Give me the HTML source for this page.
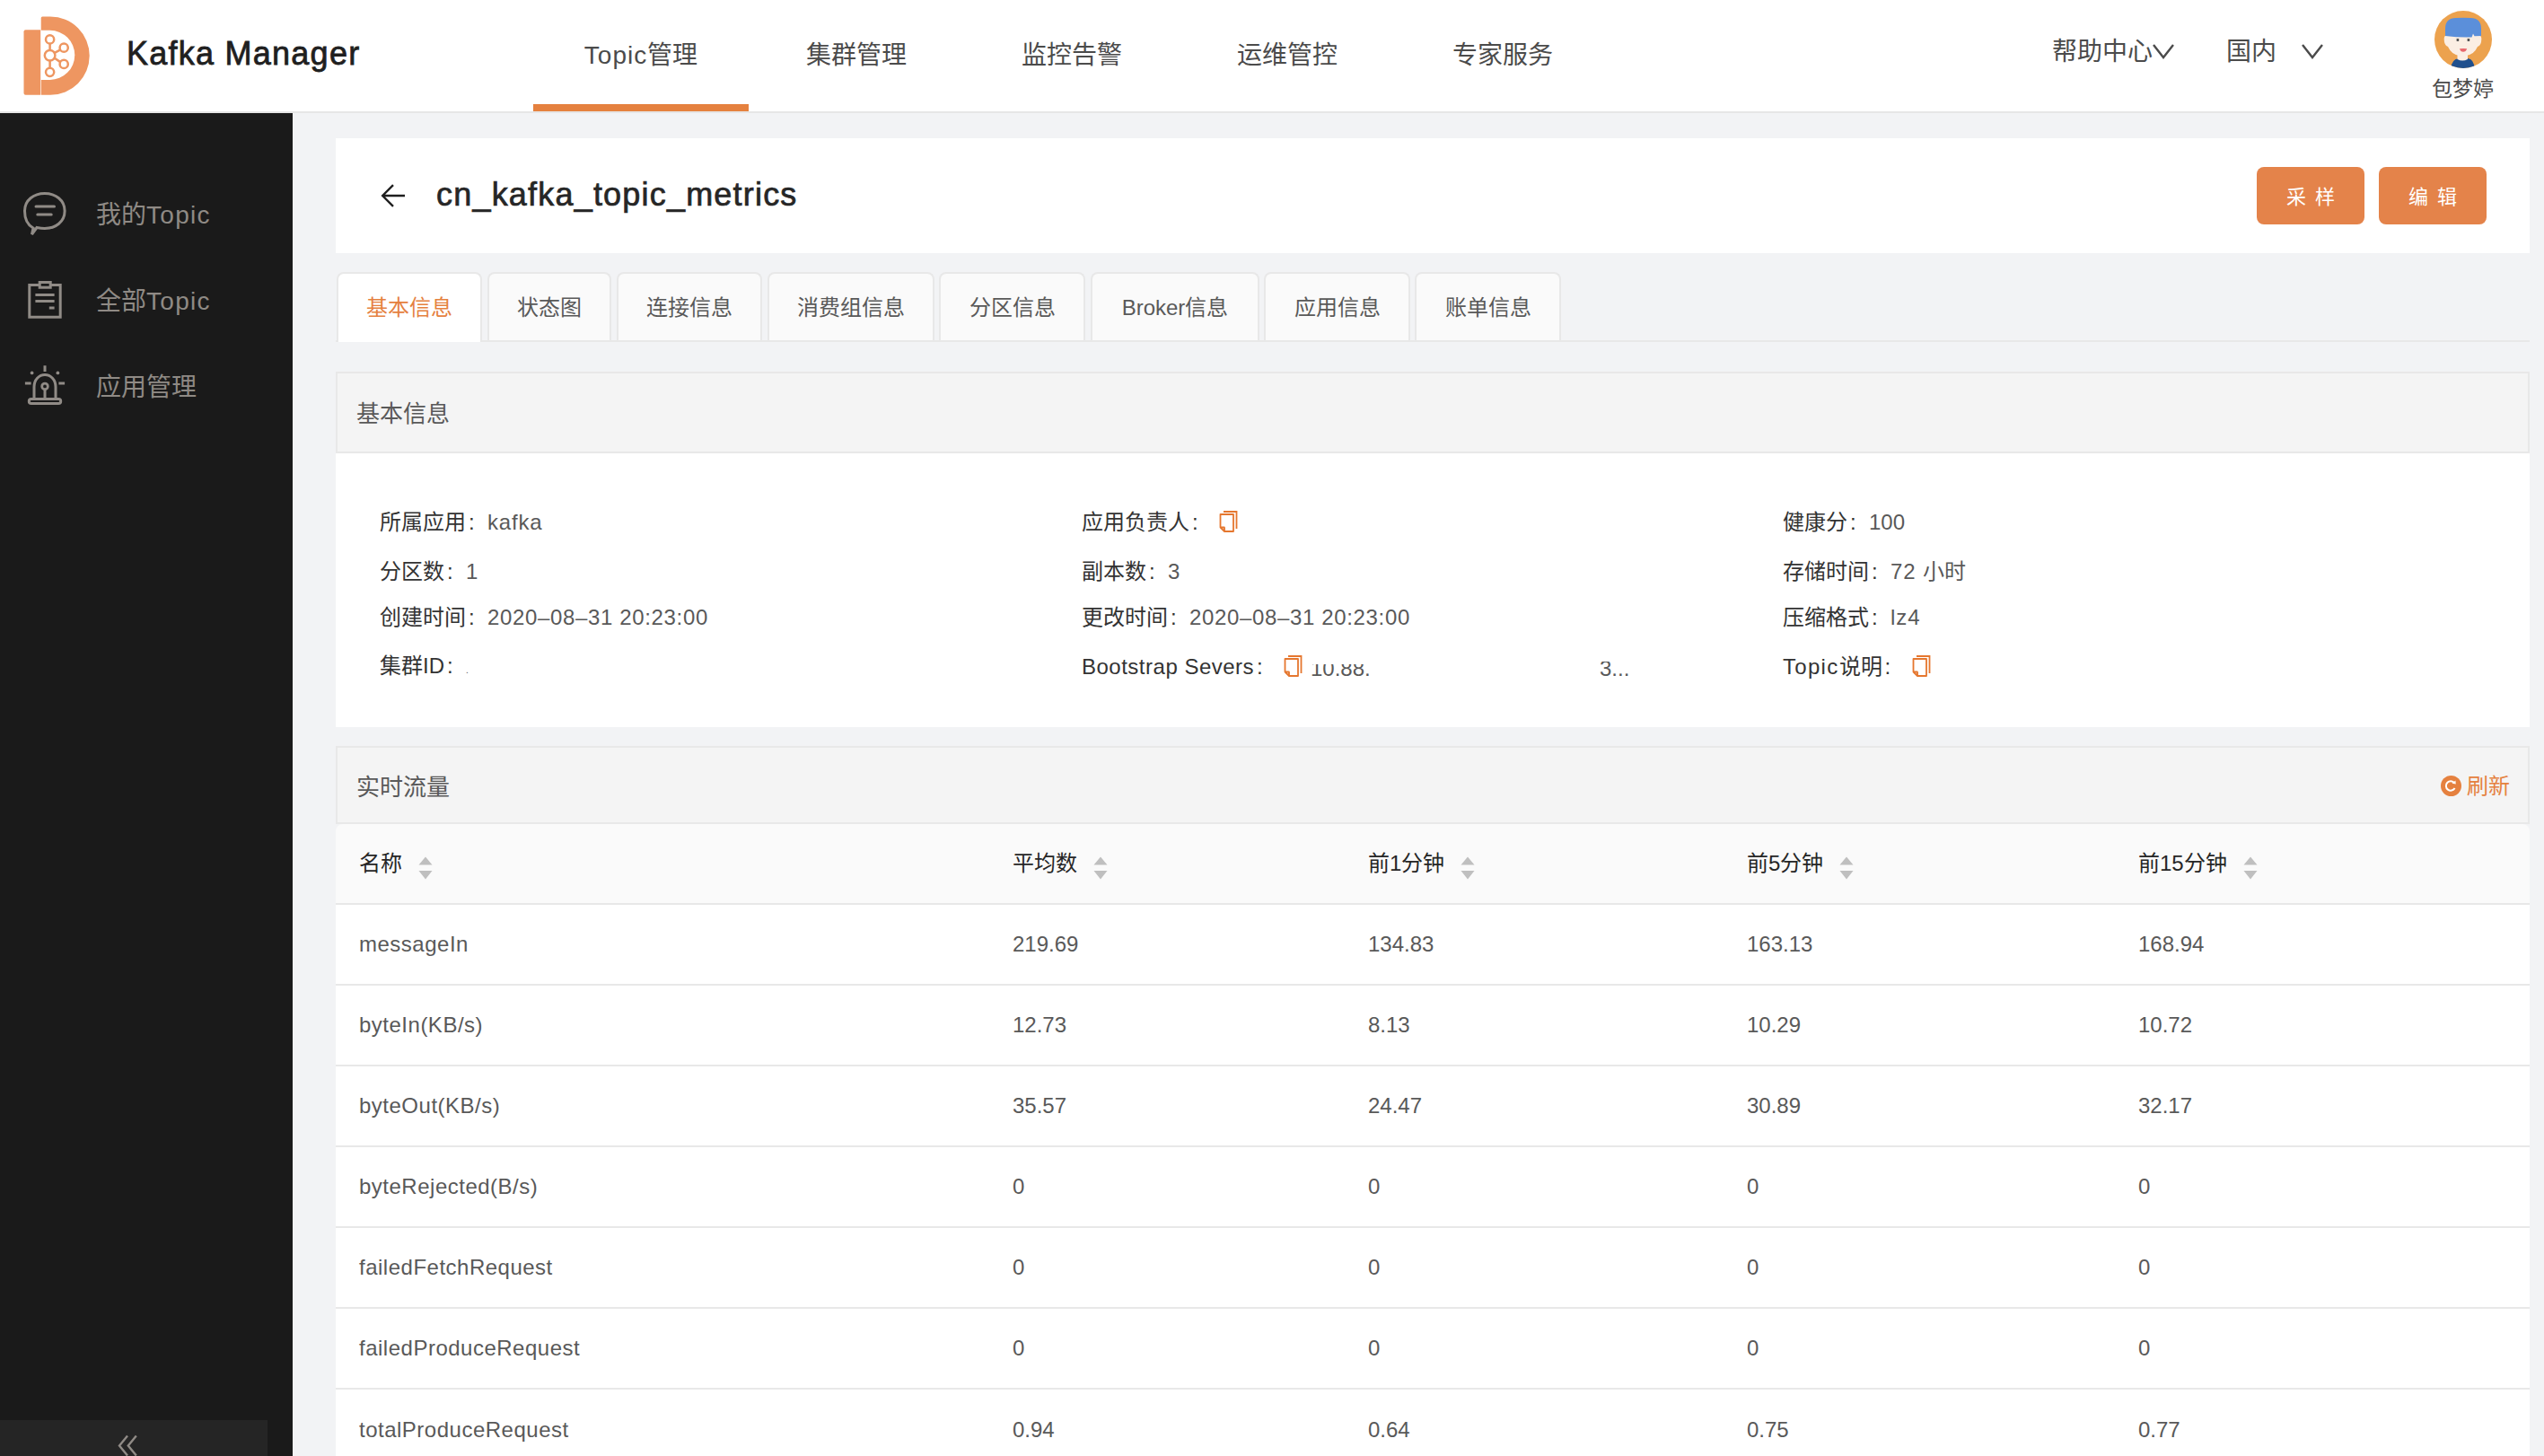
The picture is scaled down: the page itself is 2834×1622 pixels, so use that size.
<!DOCTYPE html>
<html lang="zh-CN"><head><meta charset="utf-8">
<style>
*{margin:0;padding:0;box-sizing:border-box}
html,body{width:2834px;height:1622px;overflow:hidden;background:#f2f3f5;font-family:"Liberation Sans",sans-serif}
.a{position:absolute;white-space:nowrap}
#hdr{position:absolute;left:0;top:0;width:2834px;height:126px;background:#fff;border-bottom:2px solid #e6e6e6}
#side{position:absolute;left:0;top:126px;width:326px;height:1496px;background:#1a1a1a}
.nav{position:absolute;top:38px;width:240px;height:48px;line-height:48px;text-align:center;font-size:28px;color:#4b4b4b}
.mi{position:absolute;left:107px;font-size:28px;color:#8f8a85;height:40px;line-height:40px}
.mi b{font-weight:normal;letter-spacing:1.3px}
.card{position:absolute;left:374px;width:2444px;background:#fff}
.tab{position:absolute;top:303px;height:76px;border:2px solid #e8e8e8;border-bottom:none;border-radius:8px 8px 0 0;background:#fafafa;text-align:center;line-height:76px;font-size:24px;color:#595959}
.tab.on{background:#fff;color:#e5813f;height:78px}
.ch{position:absolute;left:0;top:0;width:2444px;background:#f4f4f4;border:2px solid #e8e8e8}
.lbl{position:absolute;font-size:24px;color:#333;height:36px;line-height:36px}
.lbl span{color:#595959}
.c{display:inline-block;width:24px;padding-left:3px;font-style:normal}
.dt{font-style:normal;letter-spacing:0.65px}
.lw{letter-spacing:0.5px}
.lt{letter-spacing:1.3px}
.th{position:absolute;font-size:24px;color:#262626;height:36px;line-height:36px}
.td{position:absolute;font-size:24px;color:#595959;height:36px;line-height:36px}
.tn{letter-spacing:0.5px}
.cp{display:inline-block;vertical-align:top;margin-left:9px;margin-top:3px}
.sort{display:inline-block;vertical-align:middle;margin-left:18px;width:16px;height:26px;position:relative;top:3px}
.btn{position:absolute;top:186px;width:120px;height:64px;border-radius:8px;background:#e4834a;color:#fff;font-size:22px;line-height:68px;text-align:center;letter-spacing:10px;text-indent:10px}
</style></head>
<body>
<div id="hdr"></div>
<!-- logo -->
<svg class="a" style="left:0;top:0" width="120" height="120" viewBox="0 0 120 120">
  <path d="M45 33.3 V105.7 H28.5 Q26.5 105.7 26.5 103.7 V35.3 Q26.5 33.3 28.5 33.3 Z" fill="#ee9661"/>
  <path d="M45.7 20 Q45.7 18.5 47.2 18.5 H56.1 A43.6 43.6 0 0 1 56.1 105.7 H45.7 Z" fill="#ee9661"/>
  <path d="M45.7 33.8 H55.7 A27.55 27.55 0 0 1 55.7 88.9 H45.7 Z" fill="#fff"/>
  <g fill="none" stroke="#ee9661" stroke-width="2.5">
    <circle cx="55.6" cy="43.9" r="4.6"/><circle cx="71.2" cy="53.2" r="4.6"/><circle cx="55.6" cy="61.8" r="5.8"/>
    <circle cx="71.2" cy="71.4" r="4.6"/><circle cx="55.6" cy="80.3" r="4.6"/>
    <path d="M55.6 48.5 V56 M55.6 67.6 V75.7 M60.8 58.9 L66.9 55.6 M60.8 64.7 L66.9 68.9"/>
  </g>
</svg>
<div class="a" style="left:141px;top:35px;font-size:36px;line-height:50px;color:#1f1f1f;letter-spacing:1.25px;-webkit-text-stroke:0.8px #1f1f1f">Kafka Manager</div>

<div class="nav" style="left:594px"><span style="letter-spacing:1px">Topic</span>管理</div>
<div class="nav" style="left:834px">集群管理</div>
<div class="nav" style="left:1074px">监控告警</div>
<div class="nav" style="left:1314px">运维管控</div>
<div class="nav" style="left:1554px">专家服务</div>
<div class="a" style="left:594px;top:116px;width:240px;height:8px;background:#e5813f"></div>

<div class="a" style="left:2286px;top:38px;font-size:28px;line-height:40px;color:#4b4b4b">帮助中心</div>
<svg class="a" style="left:2396px;top:47px" width="28" height="20" viewBox="0 0 28 20"><path d="M3 3 L14 17 L25 3" fill="none" stroke="#4b4b4b" stroke-width="2.4"/></svg>
<div class="a" style="left:2480px;top:38px;font-size:28px;line-height:40px;color:#4b4b4b">国内</div>
<svg class="a" style="left:2562px;top:47px" width="28" height="20" viewBox="0 0 28 20"><path d="M3 3 L14 17 L25 3" fill="none" stroke="#4b4b4b" stroke-width="2.4"/></svg>
<!-- avatar -->
<svg class="a" style="left:2710px;top:10px" width="68" height="68" viewBox="0 0 68 68">
  <defs><clipPath id="cc"><circle cx="34" cy="34" r="32"/></clipPath></defs>
  <circle cx="34" cy="34" r="32" fill="#eca24e"/>
  <g clip-path="url(#cc)">
    <path d="M20.5 66 Q21 56 29 55 H39 Q46 56 46.5 66 Z" fill="#1f4f8d"/>
    <path d="M27.5 50 H39 V56 Q33 59 27.5 56 Z" fill="#fbeee3"/>
    <path d="M14 26 V30 Q12 31 13 37 Q14 41 17 42 Q21 51 30 52 H37 Q46 51 50 42 Q53 41 54 37 Q55 31 53 30 V26 Z" fill="#fbeee3"/>
    <path d="M14 30 V22 Q14 10 26 10 Q34 9.5 42 10 Q54 10 54 22 V30 L46.5 30.3 L45 27.5 L43.5 31.5 Q30 32 14 30 Z" fill="#5b8fda"/>
    <rect x="26.6" y="33" width="2.6" height="3" rx="0.6" fill="#555"/><rect x="38.6" y="33" width="2.6" height="3" rx="0.6" fill="#555"/>
    <path d="M30 44.3 Q34 43.6 38.2 44.3 Q37 47.8 34 47.8 Q31 47.8 30 44.3 Z" fill="#e8676c"/>
  </g>
</svg>
<div class="a" style="left:2709px;top:82px;font-size:23px;line-height:34px;color:#4b4b4b">包梦婷</div>

<div id="side"></div>
<!-- sidebar icons -->
<svg class="a" style="left:20px;top:206px" width="60" height="60" viewBox="0 0 60 60">
  <path d="M15.5 55 L17 48 C10.5 44.5 7.5 39 7.5 29 C7.5 17 17.5 9.5 29.8 9.5 C42 9.5 52.1 17 52.1 29 C52.1 41 42 48.5 29.8 48.5 C26 48.5 23.5 48 21 47.5 Z" fill="none" stroke="#908b86" stroke-width="3" stroke-linejoin="miter"/>
  <path d="M20 24 H40.5 M21.8 33 H37.2" stroke="#908b86" stroke-width="3" stroke-linecap="round"/>
</svg>
<svg class="a" style="left:20px;top:304px" width="60" height="60" viewBox="0 0 60 60">
  <path d="M12.8 13.5 H47.2 V49.3 H12.8 Z" fill="none" stroke="#908b86" stroke-width="3"/>
  <path d="M24.2 10.5 H36.2 V16.2 H24.2 Z" fill="#1a1a1a" stroke="#908b86" stroke-width="3"/>
  <path d="M19.4 24.5 H40.6 M19.4 31.6 H40.6 M34.8 39 H40.6" stroke="#908b86" stroke-width="3"/>
</svg>
<svg class="a" style="left:20px;top:400px" width="60" height="60" viewBox="0 0 60 60">
  <path d="M18 44 V31 C18 23 23.5 17.5 30 17.5 C36.5 17.5 42 23 42 31 V44" fill="none" stroke="#908b86" stroke-width="3"/>
  <rect x="12.3" y="44.4" width="35.4" height="5.1" rx="2.5" fill="none" stroke="#908b86" stroke-width="3"/>
  <circle cx="30" cy="30.4" r="3.3" fill="none" stroke="#908b86" stroke-width="2.8"/>
  <path d="M30 33.7 V44 M30 7.3 V14 M7.9 27 H14.6 M45.4 27 H52.1" stroke="#908b86" stroke-width="3"/>
  <circle cx="15.6" cy="15.4" r="1.9" fill="#908b86"/><circle cx="44.4" cy="15.4" r="1.9" fill="#908b86"/>
</svg>
<div class="mi" style="top:220px">我的<b>Topic</b></div>
<div class="mi" style="top:316px">全部<b>Topic</b></div>
<div class="mi" style="top:412px">应用管理</div>
<div class="a" style="left:0;top:1582px;width:298px;height:40px;background:#252525"></div>
<svg class="a" style="left:128px;top:1596px" width="30" height="26" viewBox="0 0 30 26"><path d="M14 3.5 L5 14.5 L14 25.5 M23.8 3.5 L14.8 14.5 L23.8 25.5" fill="none" stroke="#908b86" stroke-width="2.4"/></svg>

<!-- header card -->
<div class="card" style="top:154px;height:128px"></div>
<svg class="a" style="left:420px;top:200px" width="36" height="36" viewBox="0 0 36 36"><path d="M31 18 H7 M18 6.2 L6.2 18 L18 29.8" fill="none" stroke="#1f1f1f" stroke-width="2.4"/></svg>
<div class="a" style="left:486px;top:192px;font-size:36px;line-height:50px;color:#262626;letter-spacing:1.2px;-webkit-text-stroke:0.7px #262626">cn_kafka_topic_metrics</div>
<div class="btn" style="left:2514px">采样</div>
<div class="btn" style="left:2650px">编辑</div>

<!-- tabs -->
<div class="a" style="left:374px;top:379px;width:2444px;height:2px;background:#e8e8e8"></div>
<div class="tab on" style="left:375px;width:162px">基本信息</div>
<div class="tab" style="left:543px;width:138px">状态图</div>
<div class="tab" style="left:687px;width:162px">连接信息</div>
<div class="tab" style="left:855px;width:186px">消费组信息</div>
<div class="tab" style="left:1046px;width:163px">分区信息</div>
<div class="tab" style="left:1215px;width:188px">Broker信息</div>
<div class="tab" style="left:1408px;width:163px">应用信息</div>
<div class="tab" style="left:1576px;width:163px">账单信息</div>

<!-- basic info card -->
<div class="card" style="top:414px;height:396px">
  <div class="ch" style="height:91px"></div>
</div>
<div class="a" style="left:397px;top:443px;font-size:26px;line-height:36px;color:#595959">基本信息</div>
<div class="lbl" style="left:423px;top:564px">所属应用<i class="c">:</i><span style="letter-spacing:0.8px">kafka</span></div>
<div class="lbl" style="left:423px;top:619px">分区数<i class="c">:</i><span>1</span></div>
<div class="lbl" style="left:423px;top:670px">创建时间<i class="c">:</i><span><i class="dt">2020–08–31 20:23:00</i></span></div>
<div class="lbl" style="left:423px;top:724px">集群ID<i class="c">:</i><span style="font-size:10px">.</span></div>
<div class="lbl" style="left:1205px;top:564px">应用负责人<i class="c">:</i><span class="cpw"><svg class="cp" width="22" height="26" viewBox="0 0 22 26"><path d="M5 3 H19.5 V22" fill="none" stroke="#e5772f" stroke-width="1.8"/><path d="M1.5 6 H16 V25 H6 L1.5 20.5 Z M1.5 20.5 H5.5 Q6 20.5 6 21 V25" fill="none" stroke="#e5772f" stroke-width="1.8" stroke-linejoin="round"/></svg></span></div>
<div class="lbl" style="left:1205px;top:619px">副本数<i class="c">:</i><span>3</span></div>
<div class="lbl" style="left:1205px;top:670px">更改时间<i class="c">:</i><span><i class="dt">2020–08–31 20:23:00</i></span></div>
<div class="lbl" style="left:1205px;top:725px"><i class="lw" style="font-style:normal">Bootstrap Severs</i><i class="c">:</i><span class="cpw"><svg class="cp" width="22" height="26" viewBox="0 0 22 26"><path d="M5 3 H19.5 V22" fill="none" stroke="#e5772f" stroke-width="1.8"/><path d="M1.5 6 H16 V25 H6 L1.5 20.5 Z M1.5 20.5 H5.5 Q6 20.5 6 21 V25" fill="none" stroke="#e5772f" stroke-width="1.8" stroke-linejoin="round"/></svg></span></div>
<div class="a" style="left:1460px;top:730px;font-size:24px;line-height:30px;color:#595959;height:30px;overflow:hidden"><div style="position:relative;top:0">10.88.</div></div>
<div class="a" style="left:1460px;top:726px;width:100px;height:14px;background:#fff"></div>
<div class="a" style="left:1782px;top:730px;font-size:24px;line-height:30px;color:#595959">3...</div>
<div class="a" style="left:1780px;top:726px;width:16px;height:11px;background:#fff"></div>
<div class="lbl" style="left:1986px;top:564px">健康分<i class="c">:</i><span>100</span></div>
<div class="lbl" style="left:1986px;top:619px">存储时间<i class="c">:</i><span><i style="font-style:normal;letter-spacing:1px">72 </i>小时</span></div>
<div class="lbl" style="left:1986px;top:670px">压缩格式<i class="c">:</i><span style="letter-spacing:1px">lz4</span></div>
<div class="lbl" style="left:1986px;top:725px"><i class="lt" style="font-style:normal">Topic</i>说明<i class="c">:</i><span class="cpw"><svg class="cp" width="22" height="26" viewBox="0 0 22 26"><path d="M5 3 H19.5 V22" fill="none" stroke="#e5772f" stroke-width="1.8"/><path d="M1.5 6 H16 V25 H6 L1.5 20.5 Z M1.5 20.5 H5.5 Q6 20.5 6 21 V25" fill="none" stroke="#e5772f" stroke-width="1.8" stroke-linejoin="round"/></svg></span></div>

<!-- realtime card -->
<div class="card" style="top:831px;height:791px;background:transparent">
  <div class="ch" style="height:87px"></div>
  <div style="position:absolute;left:0;top:87px;width:2444px;height:90px;background:#fafafa;border-bottom:2px solid #e8e8e8;border-radius:8px 8px 0 0"></div>
  <div style="position:absolute;left:0;top:177px;width:2444px;height:90px;background:#fff;border-bottom:2px solid #e8e8e8"></div>
  <div style="position:absolute;left:0;top:267px;width:2444px;height:90px;background:#fff;border-bottom:2px solid #e8e8e8"></div>
  <div style="position:absolute;left:0;top:357px;width:2444px;height:90px;background:#fff;border-bottom:2px solid #e8e8e8"></div>
  <div style="position:absolute;left:0;top:447px;width:2444px;height:90px;background:#fff;border-bottom:2px solid #e8e8e8"></div>
  <div style="position:absolute;left:0;top:537px;width:2444px;height:90px;background:#fff;border-bottom:2px solid #e8e8e8"></div>
  <div style="position:absolute;left:0;top:627px;width:2444px;height:90px;background:#fff;border-bottom:2px solid #e8e8e8"></div>
  <div style="position:absolute;left:0;top:717px;width:2444px;height:90px;background:#fff;border-bottom:2px solid #e8e8e8"></div>

</div>
<div class="a" style="left:397px;top:859px;font-size:26px;line-height:36px;color:#595959">实时流量</div>
<svg class="a" style="left:2717.5px;top:862.5px" width="25" height="25" viewBox="0 0 25 25"><circle cx="12.5" cy="12.5" r="11.5" fill="#e5813f"/><path d="M16.2 9.3 A5.2 5.2 0 1 0 16.6 15" fill="none" stroke="#fff" stroke-width="2"/><path d="M13.6 9.8 L17.8 10.6 L17.4 6.4 Z" fill="#fff"/></svg>
<div class="a" style="left:2748px;top:858px;font-size:24px;line-height:36px;color:#e5813f">刷新</div>
<div class="th" style="left:400px;top:944px">名称<svg class="sort" viewBox="0 0 16 26"><path d="M0.5 9.5 L8 0.5 L15.5 9.5 Z M0.5 16 L8 25.5 L15.5 16 Z" fill="#bfbfbf"/></svg></div>
<div class="th" style="left:1128px;top:944px">平均数<svg class="sort" viewBox="0 0 16 26"><path d="M0.5 9.5 L8 0.5 L15.5 9.5 Z M0.5 16 L8 25.5 L15.5 16 Z" fill="#bfbfbf"/></svg></div>
<div class="th" style="left:1524px;top:944px">前1分钟<svg class="sort" viewBox="0 0 16 26"><path d="M0.5 9.5 L8 0.5 L15.5 9.5 Z M0.5 16 L8 25.5 L15.5 16 Z" fill="#bfbfbf"/></svg></div>
<div class="th" style="left:1946px;top:944px">前5分钟<svg class="sort" viewBox="0 0 16 26"><path d="M0.5 9.5 L8 0.5 L15.5 9.5 Z M0.5 16 L8 25.5 L15.5 16 Z" fill="#bfbfbf"/></svg></div>
<div class="th" style="left:2382px;top:944px">前15分钟<svg class="sort" viewBox="0 0 16 26"><path d="M0.5 9.5 L8 0.5 L15.5 9.5 Z M0.5 16 L8 25.5 L15.5 16 Z" fill="#bfbfbf"/></svg></div>
<div class="td tn" style="left:400px;top:1034px">messageIn</div>
<div class="td" style="left:1128px;top:1034px">219.69</div>
<div class="td" style="left:1524px;top:1034px">134.83</div>
<div class="td" style="left:1946px;top:1034px">163.13</div>
<div class="td" style="left:2382px;top:1034px">168.94</div>
<div class="td tn" style="left:400px;top:1124px">byteIn(KB/s)</div>
<div class="td" style="left:1128px;top:1124px">12.73</div>
<div class="td" style="left:1524px;top:1124px">8.13</div>
<div class="td" style="left:1946px;top:1124px">10.29</div>
<div class="td" style="left:2382px;top:1124px">10.72</div>
<div class="td tn" style="left:400px;top:1214px">byteOut(KB/s)</div>
<div class="td" style="left:1128px;top:1214px">35.57</div>
<div class="td" style="left:1524px;top:1214px">24.47</div>
<div class="td" style="left:1946px;top:1214px">30.89</div>
<div class="td" style="left:2382px;top:1214px">32.17</div>
<div class="td tn" style="left:400px;top:1304px">byteRejected(B/s)</div>
<div class="td" style="left:1128px;top:1304px">0</div>
<div class="td" style="left:1524px;top:1304px">0</div>
<div class="td" style="left:1946px;top:1304px">0</div>
<div class="td" style="left:2382px;top:1304px">0</div>
<div class="td tn" style="left:400px;top:1394px">failedFetchRequest</div>
<div class="td" style="left:1128px;top:1394px">0</div>
<div class="td" style="left:1524px;top:1394px">0</div>
<div class="td" style="left:1946px;top:1394px">0</div>
<div class="td" style="left:2382px;top:1394px">0</div>
<div class="td tn" style="left:400px;top:1484px">failedProduceRequest</div>
<div class="td" style="left:1128px;top:1484px">0</div>
<div class="td" style="left:1524px;top:1484px">0</div>
<div class="td" style="left:1946px;top:1484px">0</div>
<div class="td" style="left:2382px;top:1484px">0</div>
<div class="td tn" style="left:400px;top:1575px">totalProduceRequest</div>
<div class="td" style="left:1128px;top:1575px">0.94</div>
<div class="td" style="left:1524px;top:1575px">0.64</div>
<div class="td" style="left:1946px;top:1575px">0.75</div>
<div class="td" style="left:2382px;top:1575px">0.77</div>

</body></html>
